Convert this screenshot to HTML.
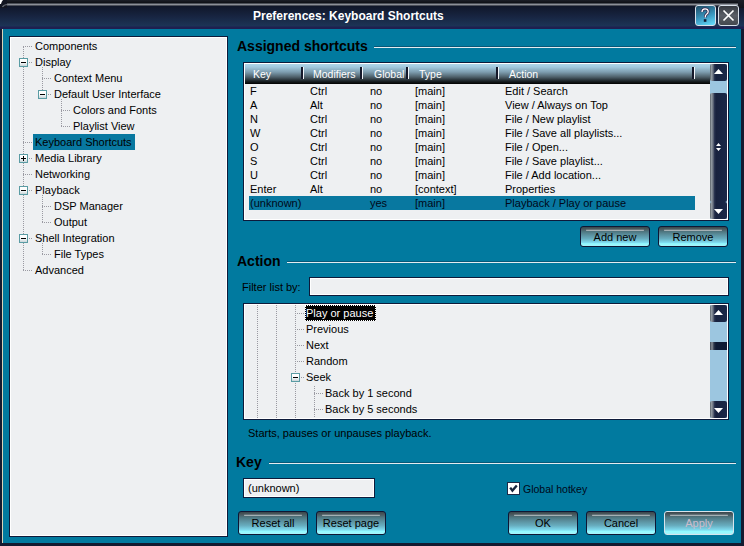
<!DOCTYPE html><html><head><meta charset="utf-8"><style>
*{margin:0;padding:0;box-sizing:border-box}
html,body{width:744px;height:546px;overflow:hidden;background:#141a30;font-family:"Liberation Sans",sans-serif;font-size:11px;color:#000}
div{position:absolute}
.t{white-space:nowrap;line-height:14px;height:14px}
.panel{background:#eef0f2;border:1px solid #0d1a3a;box-shadow:inset 0 0 0 1px #fff}
.vd{width:1px;background:repeating-linear-gradient(to bottom,#9a9aa2 0 1px,transparent 1px 2px)}
.hd{height:1px;background:repeating-linear-gradient(to right,#9a9aa2 0 1px,transparent 1px 2px)}
.box{width:9px;height:9px;border:1px solid #5a9ca4;background:linear-gradient(#fff,#fafcfc 50%,#c8d4d8)}
.box:before{content:"";position:absolute;left:1px;top:3px;width:5px;height:1px;background:#000}
.box.plus:after{content:"";position:absolute;left:3px;top:1px;width:1px;height:5px;background:#000}
.btn{border:1px solid #0e1634;border-radius:3px;text-align:center;color:#000;
 background:linear-gradient(#3a474c 0,#4a5a60 12%,#4e7680 24%,#5a8e9c 40%,#68aec0 62%,#80dcf0 82%,#92faff 88%,#a6f2fa 100%)}
.btn:before{content:"";position:absolute;left:5px;right:5px;top:3px;height:1px;border-radius:1px;background:#a4b0b4;box-shadow:0 -1px 1px rgba(140,150,155,.5)}
.btn.dis{border-color:#d8e4ec;color:#ccbccc}
.sb{background:#9cc6e0}
.sbb{border-radius:2px;background:linear-gradient(to right,#5a6268 0,#9098a0 1.5px,#6a7280 3px,#2a3450 4.5px,#18223e 6px,#1a2848 100%)}
.hdr{background:linear-gradient(#aed6ea 0,#a2c8de 15%,#7e9eb0 40%,#4e606a 65%,#1c2428 85%,#000 100%)}
.sep{width:2px;height:12px;background:#14182a;border-right:0}
.sep:after{content:"";position:absolute;left:2px;top:0;width:1px;height:12px;background:#f0f4f8}
.ht{color:#fff;line-height:14px;white-space:nowrap;font-size:10.5px}
.sect{font-weight:bold;font-size:14px;line-height:16px;white-space:nowrap;color:#000}
.etch{height:2px;border-top:1px solid #075878;background:#e4ecf0}
</style></head><body>
<div style="left:0;top:0;width:744px;height:29px;background:linear-gradient(#1c1f28 0px,#101218 2.5px,#4a4e56 3.5px,#8c9098 4.5px,#4a4e58 5.5px,#10172a 6.5px,#172440 16px,#1c3456 26px,#1e2050 27px,#1e2050 29px)"></div>
<div style="left:0;top:0;width:7px;height:8px;background:#121520"></div>
<svg style="position:absolute;left:0;top:0" width="8" height="8"><path d="M0 0 H3 Q1.5 1.5 1 4 H0 Z" fill="#fff"/><path d="M2.5 7 Q4 4.5 7.5 4.5" stroke="#6a6e76" stroke-width="1.2" fill="none"/></svg>
<div style="left:738px;top:0;width:6px;height:8px;background:linear-gradient(#1c1f28,#10131c)"></div>
<div style="left:253px;top:9px;font-weight:bold;font-size:12px;line-height:14px;color:#fff;white-space:nowrap">Preferences: Keyboard Shortcuts</div>
<div style="left:695px;top:5px;width:21px;height:21px;border:1px solid #d8e0ea;border-radius:3px;background:linear-gradient(160deg,#1e4a64,#3a98c0 55%,#68e0ff)"></div>
<svg style="position:absolute;left:695px;top:5px" width="21" height="21"><path d="M7 7 Q7 3.8 10 3.8 Q13.2 3.8 13.2 6.5 Q13.2 8.3 11.5 9.2 Q10.2 10 10.2 12.5" stroke="#3a2850" stroke-width="2.8" fill="none"/><path d="M7 7 Q7 3.8 10 3.8 Q13.2 3.8 13.2 6.5 Q13.2 8.3 11.5 9.2 Q10.2 10 10.2 12.5" stroke="#fff" stroke-width="1.3" fill="none"/><rect x="8.8" y="14.2" width="2.6" height="2.6" fill="#101830"/></svg>
<div style="left:718px;top:5px;width:21px;height:21px;border:1px solid #d8e0ea;border-radius:3px;background:linear-gradient(#34383f,#5a5e66 50%,#44484f)"></div>
<svg style="position:absolute;left:718px;top:5px" width="21" height="21"><path d="M5.5 5.5 L15.5 15.5 M15.5 5.5 L5.5 15.5" stroke="#fff" stroke-width="1.7"/></svg>
<div style="left:3px;top:29px;width:738px;height:514px;background:#017a9f"></div>
<div style="left:2px;top:29px;width:1px;height:514px;background:#d8d4b8"></div>
<div class="panel" style="left:9px;top:36px;width:219px;height:501px"></div>
<div class="vd" style="left:23px;top:47px;height:224px"></div>
<div class="vd" style="left:42px;top:67px;height:28px"></div>
<div class="vd" style="left:61px;top:99px;height:28px"></div>
<div class="vd" style="left:42px;top:195px;height:28px"></div>
<div class="vd" style="left:42px;top:243px;height:12px"></div>
<div class="hd" style="left:23px;top:46px;width:10px"></div>
<div class="t" style="left:35px;top:38px;line-height:16px;height:16px">Components</div>
<div class="hd" style="left:29px;top:62px;width:4px"></div>
<div class="box" style="left:19px;top:58px"></div>
<div class="t" style="left:35px;top:54px;line-height:16px;height:16px">Display</div>
<div class="hd" style="left:42px;top:78px;width:10px"></div>
<div class="t" style="left:54px;top:70px;line-height:16px;height:16px">Context Menu</div>
<div class="hd" style="left:48px;top:94px;width:4px"></div>
<div class="box" style="left:38px;top:90px"></div>
<div class="t" style="left:54px;top:86px;line-height:16px;height:16px">Default User Interface</div>
<div class="hd" style="left:61px;top:110px;width:10px"></div>
<div class="t" style="left:73px;top:102px;line-height:16px;height:16px">Colors and Fonts</div>
<div class="hd" style="left:61px;top:126px;width:10px"></div>
<div class="t" style="left:73px;top:118px;line-height:16px;height:16px">Playlist View</div>
<div class="hd" style="left:23px;top:142px;width:10px"></div>
<div style="left:33px;top:134px;width:102px;height:16px;background:#0878a0"></div>
<div class="t" style="left:35px;top:134px;line-height:16px;height:16px">Keyboard Shortcuts</div>
<div class="hd" style="left:29px;top:158px;width:4px"></div>
<div class="box plus" style="left:19px;top:154px"></div>
<div class="t" style="left:35px;top:150px;line-height:16px;height:16px">Media Library</div>
<div class="hd" style="left:23px;top:174px;width:10px"></div>
<div class="t" style="left:35px;top:166px;line-height:16px;height:16px">Networking</div>
<div class="hd" style="left:29px;top:190px;width:4px"></div>
<div class="box" style="left:19px;top:186px"></div>
<div class="t" style="left:35px;top:182px;line-height:16px;height:16px">Playback</div>
<div class="hd" style="left:42px;top:206px;width:10px"></div>
<div class="t" style="left:54px;top:198px;line-height:16px;height:16px">DSP Manager</div>
<div class="hd" style="left:42px;top:222px;width:10px"></div>
<div class="t" style="left:54px;top:214px;line-height:16px;height:16px">Output</div>
<div class="hd" style="left:29px;top:238px;width:4px"></div>
<div class="box" style="left:19px;top:234px"></div>
<div class="t" style="left:35px;top:230px;line-height:16px;height:16px">Shell Integration</div>
<div class="hd" style="left:42px;top:254px;width:10px"></div>
<div class="t" style="left:54px;top:246px;line-height:16px;height:16px">File Types</div>
<div class="hd" style="left:23px;top:270px;width:10px"></div>
<div class="t" style="left:35px;top:262px;line-height:16px;height:16px">Advanced</div>
<div class="sect" style="left:237px;top:38px">Assigned shortcuts</div>
<div class="etch" style="left:374px;top:46px;width:362px"></div>
<div style="left:243px;top:62px;width:486px;height:159px;background:#0d1a3a"></div>
<div style="left:244px;top:63px;width:484px;height:157px;background:#fff"></div>
<div style="left:245px;top:84px;width:465px;height:135px;background:#eef0f2"></div>
<div class="hdr" style="left:245px;top:64px;width:465px;height:20px"></div>
<div class="sep" style="left:301px;top:67px"></div>
<div class="sep" style="left:360px;top:67px"></div>
<div class="sep" style="left:406px;top:67px"></div>
<div class="sep" style="left:496px;top:67px"></div>
<div class="sep" style="left:692px;top:67px"></div>
<div class="ht" style="left:253px;top:67px">Key</div>
<div class="ht" style="left:313px;top:67px">Modifiers</div>
<div class="ht" style="left:374px;top:67px">Global</div>
<div class="ht" style="left:419px;top:67px">Type</div>
<div class="ht" style="left:509px;top:67px">Action</div>
<div style="left:249px;top:196px;width:446px;height:14px;background:#0878a0"></div>
<div class="t" style="left:250px;top:84px;color:#000">F</div>
<div class="t" style="left:310px;top:84px;color:#000">Ctrl</div>
<div class="t" style="left:370px;top:84px;color:#000">no</div>
<div class="t" style="left:415px;top:84px;color:#000">[main]</div>
<div class="t" style="left:505px;top:84px;color:#000">Edit / Search</div>
<div class="t" style="left:250px;top:98px;color:#000">A</div>
<div class="t" style="left:310px;top:98px;color:#000">Alt</div>
<div class="t" style="left:370px;top:98px;color:#000">no</div>
<div class="t" style="left:415px;top:98px;color:#000">[main]</div>
<div class="t" style="left:505px;top:98px;color:#000">View / Always on Top</div>
<div class="t" style="left:250px;top:112px;color:#000">N</div>
<div class="t" style="left:310px;top:112px;color:#000">Ctrl</div>
<div class="t" style="left:370px;top:112px;color:#000">no</div>
<div class="t" style="left:415px;top:112px;color:#000">[main]</div>
<div class="t" style="left:505px;top:112px;color:#000">File / New playlist</div>
<div class="t" style="left:250px;top:126px;color:#000">W</div>
<div class="t" style="left:310px;top:126px;color:#000">Ctrl</div>
<div class="t" style="left:370px;top:126px;color:#000">no</div>
<div class="t" style="left:415px;top:126px;color:#000">[main]</div>
<div class="t" style="left:505px;top:126px;color:#000">File / Save all playlists...</div>
<div class="t" style="left:250px;top:140px;color:#000">O</div>
<div class="t" style="left:310px;top:140px;color:#000">Ctrl</div>
<div class="t" style="left:370px;top:140px;color:#000">no</div>
<div class="t" style="left:415px;top:140px;color:#000">[main]</div>
<div class="t" style="left:505px;top:140px;color:#000">File / Open...</div>
<div class="t" style="left:250px;top:154px;color:#000">S</div>
<div class="t" style="left:310px;top:154px;color:#000">Ctrl</div>
<div class="t" style="left:370px;top:154px;color:#000">no</div>
<div class="t" style="left:415px;top:154px;color:#000">[main]</div>
<div class="t" style="left:505px;top:154px;color:#000">File / Save playlist...</div>
<div class="t" style="left:250px;top:168px;color:#000">U</div>
<div class="t" style="left:310px;top:168px;color:#000">Ctrl</div>
<div class="t" style="left:370px;top:168px;color:#000">no</div>
<div class="t" style="left:415px;top:168px;color:#000">[main]</div>
<div class="t" style="left:505px;top:168px;color:#000">File / Add location...</div>
<div class="t" style="left:250px;top:182px;color:#000">Enter</div>
<div class="t" style="left:310px;top:182px;color:#000">Alt</div>
<div class="t" style="left:370px;top:182px;color:#000">no</div>
<div class="t" style="left:415px;top:182px;color:#000">[context]</div>
<div class="t" style="left:505px;top:182px;color:#000">Properties</div>
<div class="t" style="left:250px;top:196px;color:#000818">(unknown)</div>
<div class="t" style="left:370px;top:196px;color:#000818">yes</div>
<div class="t" style="left:415px;top:196px;color:#000818">[main]</div>
<div class="t" style="left:505px;top:196px;color:#000818">Playback / Play or pause</div>
<div class="sb" style="left:710px;top:64px;width:17px;height:155px"></div>
<div class="sbb" style="left:710px;top:64px;width:17px;height:17px"></div>
<svg style="position:absolute;left:710px;top:64px" width="17" height="17"><path d="M4 10 L13 10 L8.5 5 Z" fill="#fff"/></svg>
<div class="sbb" style="left:710px;top:93px;width:17px;height:109px"></div>
<svg style="position:absolute;left:710px;top:140px" width="17" height="14"><path d="M6 6 L11 6 L8.5 3 Z M6 8 L11 8 L8.5 11 Z" fill="#fff"/></svg>
<div class="sbb" style="left:710px;top:202px;width:17px;height:17px"></div>
<svg style="position:absolute;left:710px;top:202px" width="17" height="17"><path d="M4 7 L13 7 L8.5 12 Z" fill="#fff"/></svg>
<div class="btn" style="left:580px;top:226px;width:70px;height:21px;line-height:20px">Add new</div>
<div class="btn" style="left:658px;top:226px;width:70px;height:21px;line-height:20px">Remove</div>
<div class="sect" style="left:237px;top:253px">Action</div>
<div class="etch" style="left:287px;top:261px;width:449px"></div>
<div class="t" style="left:242px;top:280px">Filter list by:</div>
<div style="left:309px;top:277px;width:420px;height:19px;background:#eef0f2;border:1px solid #0d1a3a;box-shadow:inset 0 0 0 1px #fff"></div>
<div style="left:243px;top:303px;width:486px;height:117px;background:#0d1a3a"></div>
<div style="left:244px;top:304px;width:484px;height:115px;background:#fff"></div>
<div style="left:245px;top:305px;width:465px;height:113px;background:#eef0f2"></div>
<div class="vd" style="left:257px;top:305px;height:113px"></div>
<div class="vd" style="left:276px;top:305px;height:113px"></div>
<div class="vd" style="left:295px;top:305px;height:113px"></div>
<div class="vd" style="left:314px;top:386px;height:32px"></div>
<div class="hd" style="left:295px;top:313px;width:9px"></div>
<div style="left:305px;top:305px;width:71px;height:16px;background:#000;outline:1px dotted #fff;outline-offset:-1px"></div>
<div class="t" style="left:306px;top:305px;line-height:16px;height:16px;color:#fff">Play or pause</div>
<div class="hd" style="left:295px;top:329px;width:9px"></div>
<div class="t" style="left:306px;top:321px;line-height:16px;height:16px">Previous</div>
<div class="hd" style="left:295px;top:345px;width:9px"></div>
<div class="t" style="left:306px;top:337px;line-height:16px;height:16px">Next</div>
<div class="hd" style="left:295px;top:361px;width:9px"></div>
<div class="t" style="left:306px;top:353px;line-height:16px;height:16px">Random</div>
<div class="hd" style="left:301px;top:377px;width:3px"></div>
<div class="box" style="left:291px;top:373px"></div>
<div class="t" style="left:306px;top:369px;line-height:16px;height:16px">Seek</div>
<div class="hd" style="left:314px;top:393px;width:9px"></div>
<div class="t" style="left:325px;top:385px;line-height:16px;height:16px">Back by 1 second</div>
<div class="hd" style="left:314px;top:409px;width:9px"></div>
<div class="t" style="left:325px;top:401px;line-height:16px;height:16px">Back by 5 seconds</div>
<div class="sb" style="left:710px;top:305px;width:17px;height:113px"></div>
<div class="sbb" style="left:710px;top:305px;width:17px;height:17px"></div>
<svg style="position:absolute;left:710px;top:305px" width="17" height="17"><path d="M4 10 L13 10 L8.5 5 Z" fill="#fff"/></svg>
<div class="sbb" style="left:710px;top:342px;width:17px;height:8px;border-radius:0;background:linear-gradient(to right,#3a4250 0,#8a9098 2px,#2a3448 4px,#0e1a34 6px,#0e1a34 100%)"></div>
<div class="sbb" style="left:710px;top:401px;width:17px;height:17px"></div>
<svg style="position:absolute;left:710px;top:401px" width="17" height="17"><path d="M4 7 L13 7 L8.5 12 Z" fill="#fff"/></svg>
<div class="t" style="left:248px;top:426px">Starts, pauses or unpauses playback.</div>
<div class="sect" style="left:236px;top:454px">Key</div>
<div class="etch" style="left:269px;top:462px;width:467px"></div>
<div style="left:243px;top:478px;width:132px;height:20px;background:#eef0f2;border:1px solid #0d1a3a;box-shadow:inset 0 0 0 1px #fff"></div>
<div class="t" style="left:248px;top:481px">(unknown)</div>
<div style="left:507px;top:482px;width:13px;height:13px;background:#fff;border:1px solid #1c2a48"></div>
<svg style="position:absolute;left:507px;top:482px" width="13" height="13"><path d="M3.2 5.6 L5.4 8.6 L9.8 3.4" stroke="#18263e" stroke-width="2.3" fill="none"/></svg>
<div class="t" style="left:523px;top:482px;color:#000818;font-size:10.5px">Global hotkey</div>
<div class="btn" style="left:238px;top:511px;width:70px;height:24px;line-height:22px">Reset all</div>
<div class="btn" style="left:316px;top:511px;width:70px;height:24px;line-height:22px">Reset page</div>
<div class="btn" style="left:508px;top:511px;width:70px;height:24px;line-height:22px">OK</div>
<div class="btn" style="left:586px;top:511px;width:70px;height:24px;line-height:22px">Cancel</div>
<div class="btn dis" style="left:664px;top:511px;width:70px;height:24px;line-height:22px">Apply</div>
</body></html>
